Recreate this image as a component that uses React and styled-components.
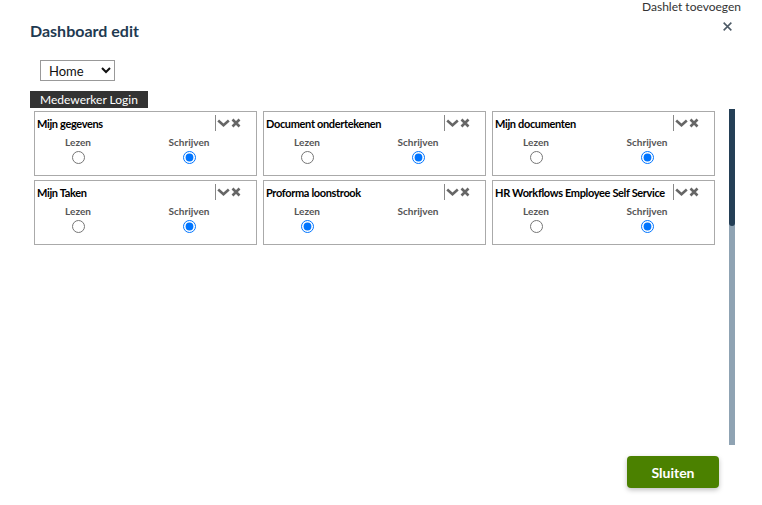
import React from 'react';
import styled, { createGlobalStyle } from 'styled-components';

const GlobalStyle = createGlobalStyle`
  html, body {
    margin: 0;
    padding: 0;
    background: #fff;
  }
  body {
    font-family: Lato, "Liberation Sans", sans-serif;
    color: #222;
  }
`;

const StyledPage = styled.div`
  width: 762px;
  height: 505px;
  box-sizing: border-box;
  padding: 0 27px 0 30px;
  display: flex;
  flex-direction: column;
`;

const StyledHeader = styled.div`
  display: flex;
  justify-content: space-between;
  align-items: flex-start;
  margin-right: -6px;
`;

const StyledTitle = styled.h1`
  margin: 21px 0 0;
  font-size: 16px;
  line-height: 20px;
  font-weight: 700;
  color: #1f3a51;
`;

const StyledActions = styled.div`
  display: flex;
  flex-direction: column;
  align-items: flex-end;
`;

const StyledAddLink = styled.span`
  font-size: 12px;
  line-height: 14px;
  color: #333;
`;

const StyledClose = styled.button`
  margin: 6px 8px 0 0;
  padding: 0;
  border: 0;
  background: none;
  width: 12px;
  height: 12px;
  display: flex;
  align-items: center;
  justify-content: center;
`;

const StyledSelect = styled.select`
  margin: 19px 0 0 10px;
  width: 75px;
  height: 21px;
  border: 1px solid #999;
  border-radius: 0;
  background: #fff;
  font-family: Lato, "Liberation Sans", sans-serif;
  font-size: 13px;
  color: #111;
  padding: 0 2px 0 4px;
`;

const StyledTab = styled.div`
  align-self: flex-start;
  margin-top: 10px;
  background: #333;
  color: #fff;
  font-size: 12px;
  line-height: 17px;
  padding: 0 10px;
`;

const StyledScrollRow = styled.div`
  display: flex;
  align-items: flex-start;
  height: 336px;
  margin-top: 1px;
`;

const StyledGrid = styled.div`
  display: grid;
  grid-template-columns: repeat(3, 223px);
  grid-auto-rows: min-content;
  column-gap: 6px;
  row-gap: 4px;
  padding: 2px 0 0 4px;
`;

const StyledCard = styled.div`
  border: 1px solid #aaa;
  box-sizing: border-box;
  height: 65px;
  padding: 3px 15px 0 2px;
`;

const StyledCardHead = styled.div`
  display: flex;
  align-items: center;
  justify-content: space-between;
  height: 16px;
`;

const StyledCardTitle = styled.span`
  font-size: 11px;
  font-weight: 700;
  letter-spacing: -0.35px;
  color: #000;
  white-space: nowrap;
`;

const StyledTools = styled.div`
  display: flex;
  align-items: center;
  gap: 1px;
  height: 16px;
  border-left: 1px solid #888;
  padding-left: 1px;
`;

const StyledOptions = styled.div`
  display: grid;
  grid-template-columns: 86px 136px;
  margin: 5px 0 0 -2px;
`;

const StyledOption = styled.label`
  display: flex;
  flex-direction: column;
  align-items: center;
  font-size: 10px;
  line-height: 12px;
  font-weight: 700;
  color: #555;
`;

const StyledRadio = styled.input`
  margin: 3px 0 0;
  width: 13px;
  height: 13px;
  visibility: ${({ hidden }) => (hidden ? 'hidden' : 'visible')};
`;

const StyledScrollbar = styled.div`
  margin-left: 14px;
  width: 6px;
  height: 336px;
  background: #8fa3b3;
  display: flex;
  flex-direction: column;
`;

const StyledThumb = styled.div`
  height: 117px;
  background: #243f56;
  border-radius: 0 0 3px 3px;
`;

const StyledFooter = styled.div`
  display: flex;
  justify-content: flex-end;
  margin: 11px 16px 0 0;
`;

const StyledButton = styled.button`
  width: 92px;
  height: 32px;
  border: 0;
  border-radius: 4px;
  background: #4b8100;
  color: #fff;
  font-family: Lato, "Liberation Sans", sans-serif;
  font-size: 14px;
  font-weight: 700;
  box-shadow: 0 2px 5px rgba(0, 0, 0, 0.25);
`;

const Chevron = () => (
  <svg width="13" height="10" viewBox="0 0 13 10">
    <path d="M1.2 2.5 L6.5 7.2 L11.8 2.5" fill="none" stroke="#666" strokeWidth="2.6" />
  </svg>
);

const Cross = ({ color = '#666', size = 10, weight = 2.6 }) => (
  <svg width={size} height={size} viewBox="0 0 10 10">
    <path d="M1.5 1.5 L8.5 8.5 M8.5 1.5 L1.5 8.5" fill="none" stroke={color} strokeWidth={weight} />
  </svg>
);

const dashlets = [
  { id: 1, title: 'Mijn gegevens', value: 'write' },
  { id: 2, title: 'Document ondertekenen', value: 'write' },
  { id: 3, title: 'Mijn documenten', value: 'write' },
  { id: 4, title: 'Mijn Taken', value: 'write' },
  { id: 5, title: 'Proforma loonstrook', value: 'read', readOnly: true },
  { id: 6, title: 'HR Workflows Employee Self Service', value: 'write' },
];

const Dashlet = ({ dashlet }) => (
  <StyledCard>
    <StyledCardHead>
      <StyledCardTitle>{dashlet.title}</StyledCardTitle>
      <StyledTools>
        <Chevron />
        <Cross />
      </StyledTools>
    </StyledCardHead>
    <StyledOptions>
      <StyledOption>
        Lezen
        <StyledRadio type="radio" name={`d${dashlet.id}`} defaultChecked={dashlet.value === 'read'} />
      </StyledOption>
      <StyledOption>
        Schrijven
        <StyledRadio
          type="radio"
          name={`d${dashlet.id}`}
          hidden={dashlet.readOnly}
          defaultChecked={dashlet.value === 'write'}
        />
      </StyledOption>
    </StyledOptions>
  </StyledCard>
);

const App = () => {
  return (
    <>
      <GlobalStyle />
      <StyledPage>
        <StyledHeader>
          <StyledTitle>Dashboard edit</StyledTitle>
          <StyledActions>
            <StyledAddLink>Dashlet toevoegen</StyledAddLink>
            <StyledClose aria-label="Sluiten">
              <Cross color="#4d5a66" size={11} weight={1.4} />
            </StyledClose>
          </StyledActions>
        </StyledHeader>
        <StyledSelect defaultValue="home">
          <option value="home">Home</option>
        </StyledSelect>
        <StyledTab>Medewerker Login</StyledTab>
        <StyledScrollRow>
          <StyledGrid>
            {dashlets.map((d) => (
              <Dashlet key={d.id} dashlet={d} />
            ))}
          </StyledGrid>
          <StyledScrollbar>
            <StyledThumb />
          </StyledScrollbar>
        </StyledScrollRow>
        <StyledFooter>
          <StyledButton>Sluiten</StyledButton>
        </StyledFooter>
      </StyledPage>
    </>
  );
};

export default App;
